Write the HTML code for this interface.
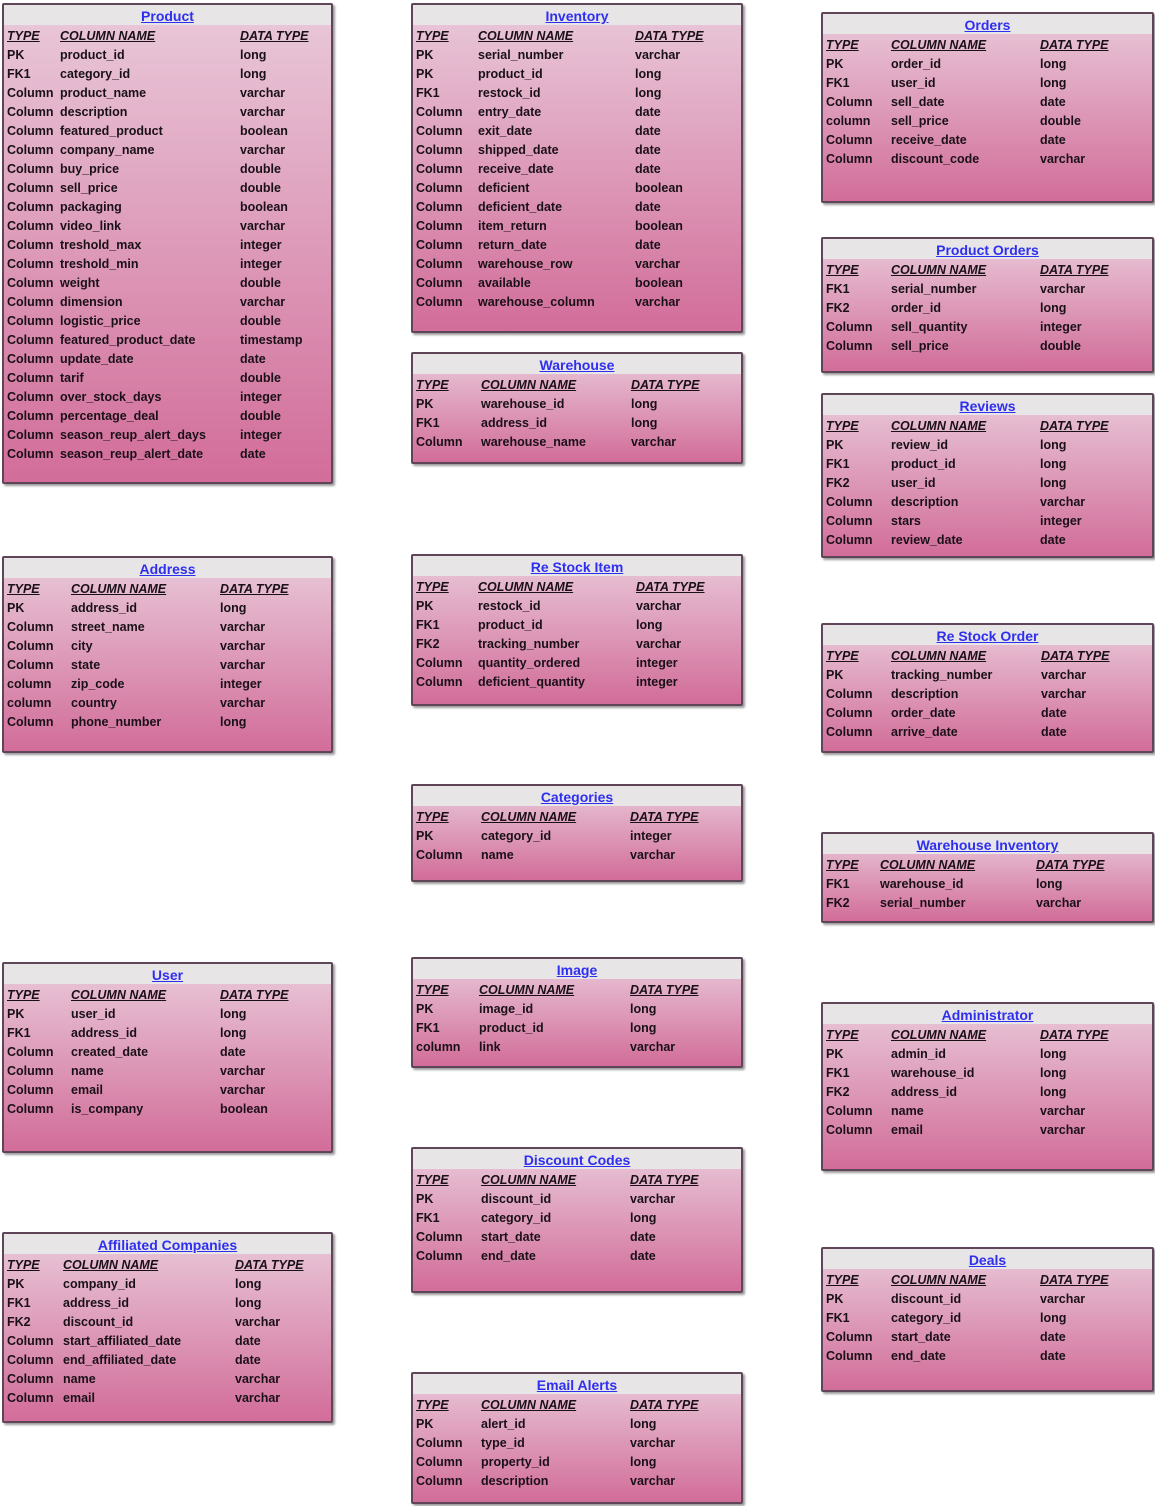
<!DOCTYPE html>
<html><head><meta charset="utf-8"><style>
*{margin:0;padding:0;box-sizing:border-box}
body{width:1155px;height:1506px;background:#fff;position:relative;overflow:hidden;font-family:"Liberation Sans",sans-serif;font-size:12.5px;font-weight:bold;color:#1a1018}
.t{position:absolute;border:2px solid #5e4658;border-radius:2px;background:linear-gradient(#e9c9da,#d26d99);box-shadow:2px 2px 2px #9a9a9a}
.h{height:20px;margin-bottom:2px;background:#e7e5e6;text-align:center;color:#2f2ff0;text-decoration:underline;font-size:14px;line-height:22px}
.r{position:relative;height:19px;line-height:19px;white-space:nowrap}
.r span{position:absolute;top:0}
.r span:nth-child(1){left:3px}
.r span:nth-child(2){left:var(--n)}
.r span:nth-child(3){left:var(--d)}
.hd span{font-style:italic;text-decoration:underline}
</style></head><body>

<div class="t" style="left:2px;top:3px;width:331px;height:481px;--n:56px;--d:236px">
<div class="h">Product</div>
<div class="r hd"><span>TYPE</span><span>COLUMN NAME</span><span>DATA TYPE</span></div>
<div class="r"><span>PK</span><span>product_id</span><span>long</span></div>
<div class="r"><span>FK1</span><span>category_id</span><span>long</span></div>
<div class="r"><span>Column</span><span>product_name</span><span>varchar</span></div>
<div class="r"><span>Column</span><span>description</span><span>varchar</span></div>
<div class="r"><span>Column</span><span>featured_product</span><span>boolean</span></div>
<div class="r"><span>Column</span><span>company_name</span><span>varchar</span></div>
<div class="r"><span>Column</span><span>buy_price</span><span>double</span></div>
<div class="r"><span>Column</span><span>sell_price</span><span>double</span></div>
<div class="r"><span>Column</span><span>packaging</span><span>boolean</span></div>
<div class="r"><span>Column</span><span>video_link</span><span>varchar</span></div>
<div class="r"><span>Column</span><span>treshold_max</span><span>integer</span></div>
<div class="r"><span>Column</span><span>treshold_min</span><span>integer</span></div>
<div class="r"><span>Column</span><span>weight</span><span>double</span></div>
<div class="r"><span>Column</span><span>dimension</span><span>varchar</span></div>
<div class="r"><span>Column</span><span>logistic_price</span><span>double</span></div>
<div class="r"><span>Column</span><span>featured_product_date</span><span>timestamp</span></div>
<div class="r"><span>Column</span><span>update_date</span><span>date</span></div>
<div class="r"><span>Column</span><span>tarif</span><span>double</span></div>
<div class="r"><span>Column</span><span>over_stock_days</span><span>integer</span></div>
<div class="r"><span>Column</span><span>percentage_deal</span><span>double</span></div>
<div class="r"><span>Column</span><span>season_reup_alert_days</span><span>integer</span></div>
<div class="r"><span>Column</span><span>season_reup_alert_date</span><span>date</span></div>
</div>

<div class="t" style="left:411px;top:3px;width:332px;height:330px;--n:65px;--d:222px">
<div class="h">Inventory</div>
<div class="r hd"><span>TYPE</span><span>COLUMN NAME</span><span>DATA TYPE</span></div>
<div class="r"><span>PK</span><span>serial_number</span><span>varchar</span></div>
<div class="r"><span>PK</span><span>product_id</span><span>long</span></div>
<div class="r"><span>FK1</span><span>restock_id</span><span>long</span></div>
<div class="r"><span>Column</span><span>entry_date</span><span>date</span></div>
<div class="r"><span>Column</span><span>exit_date</span><span>date</span></div>
<div class="r"><span>Column</span><span>shipped_date</span><span>date</span></div>
<div class="r"><span>Column</span><span>receive_date</span><span>date</span></div>
<div class="r"><span>Column</span><span>deficient</span><span>boolean</span></div>
<div class="r"><span>Column</span><span>deficient_date</span><span>date</span></div>
<div class="r"><span>Column</span><span>item_return</span><span>boolean</span></div>
<div class="r"><span>Column</span><span>return_date</span><span>date</span></div>
<div class="r"><span>Column</span><span>warehouse_row</span><span>varchar</span></div>
<div class="r"><span>Column</span><span>available</span><span>boolean</span></div>
<div class="r"><span>Column</span><span>warehouse_column</span><span>varchar</span></div>
</div>

<div class="t" style="left:821px;top:12px;width:333px;height:191px;--n:68px;--d:217px">
<div class="h">Orders</div>
<div class="r hd"><span>TYPE</span><span>COLUMN NAME</span><span>DATA TYPE</span></div>
<div class="r"><span>PK</span><span>order_id</span><span>long</span></div>
<div class="r"><span>FK1</span><span>user_id</span><span>long</span></div>
<div class="r"><span>Column</span><span>sell_date</span><span>date</span></div>
<div class="r"><span>column</span><span>sell_price</span><span>double</span></div>
<div class="r"><span>Column</span><span>receive_date</span><span>date</span></div>
<div class="r"><span>Column</span><span>discount_code</span><span>varchar</span></div>
</div>

<div class="t" style="left:821px;top:237px;width:333px;height:136px;--n:68px;--d:217px">
<div class="h">Product Orders</div>
<div class="r hd"><span>TYPE</span><span>COLUMN NAME</span><span>DATA TYPE</span></div>
<div class="r"><span>FK1</span><span>serial_number</span><span>varchar</span></div>
<div class="r"><span>FK2</span><span>order_id</span><span>long</span></div>
<div class="r"><span>Column</span><span>sell_quantity</span><span>integer</span></div>
<div class="r"><span>Column</span><span>sell_price</span><span>double</span></div>
</div>

<div class="t" style="left:411px;top:352px;width:332px;height:112px;--n:68px;--d:218px">
<div class="h">Warehouse</div>
<div class="r hd"><span>TYPE</span><span>COLUMN NAME</span><span>DATA TYPE</span></div>
<div class="r"><span>PK</span><span>warehouse_id</span><span>long</span></div>
<div class="r"><span>FK1</span><span>address_id</span><span>long</span></div>
<div class="r"><span>Column</span><span>warehouse_name</span><span>varchar</span></div>
</div>

<div class="t" style="left:821px;top:393px;width:333px;height:165px;--n:68px;--d:217px">
<div class="h">Reviews</div>
<div class="r hd"><span>TYPE</span><span>COLUMN NAME</span><span>DATA TYPE</span></div>
<div class="r"><span>PK</span><span>review_id</span><span>long</span></div>
<div class="r"><span>FK1</span><span>product_id</span><span>long</span></div>
<div class="r"><span>FK2</span><span>user_id</span><span>long</span></div>
<div class="r"><span>Column</span><span>description</span><span>varchar</span></div>
<div class="r"><span>Column</span><span>stars</span><span>integer</span></div>
<div class="r"><span>Column</span><span>review_date</span><span>date</span></div>
</div>

<div class="t" style="left:2px;top:556px;width:331px;height:197px;--n:67px;--d:216px">
<div class="h">Address</div>
<div class="r hd"><span>TYPE</span><span>COLUMN NAME</span><span>DATA TYPE</span></div>
<div class="r"><span>PK</span><span>address_id</span><span>long</span></div>
<div class="r"><span>Column</span><span>street_name</span><span>varchar</span></div>
<div class="r"><span>Column</span><span>city</span><span>varchar</span></div>
<div class="r"><span>Column</span><span>state</span><span>varchar</span></div>
<div class="r"><span>column</span><span>zip_code</span><span>integer</span></div>
<div class="r"><span>column</span><span>country</span><span>varchar</span></div>
<div class="r"><span>Column</span><span>phone_number</span><span>long</span></div>
</div>

<div class="t" style="left:411px;top:554px;width:332px;height:152px;--n:65px;--d:223px">
<div class="h">Re Stock Item</div>
<div class="r hd"><span>TYPE</span><span>COLUMN NAME</span><span>DATA TYPE</span></div>
<div class="r"><span>PK</span><span>restock_id</span><span>varchar</span></div>
<div class="r"><span>FK1</span><span>product_id</span><span>long</span></div>
<div class="r"><span>FK2</span><span>tracking_number</span><span>varchar</span></div>
<div class="r"><span>Column</span><span>quantity_ordered</span><span>integer</span></div>
<div class="r"><span>Column</span><span>deficient_quantity</span><span>integer</span></div>
</div>

<div class="t" style="left:821px;top:623px;width:333px;height:130px;--n:68px;--d:218px">
<div class="h">Re Stock Order</div>
<div class="r hd"><span>TYPE</span><span>COLUMN NAME</span><span>DATA TYPE</span></div>
<div class="r"><span>PK</span><span>tracking_number</span><span>varchar</span></div>
<div class="r"><span>Column</span><span>description</span><span>varchar</span></div>
<div class="r"><span>Column</span><span>order_date</span><span>date</span></div>
<div class="r"><span>Column</span><span>arrive_date</span><span>date</span></div>
</div>

<div class="t" style="left:411px;top:784px;width:332px;height:98px;--n:68px;--d:217px">
<div class="h">Categories</div>
<div class="r hd"><span>TYPE</span><span>COLUMN NAME</span><span>DATA TYPE</span></div>
<div class="r"><span>PK</span><span>category_id</span><span>integer</span></div>
<div class="r"><span>Column</span><span>name</span><span>varchar</span></div>
</div>

<div class="t" style="left:821px;top:832px;width:333px;height:91px;--n:57px;--d:213px">
<div class="h">Warehouse Inventory</div>
<div class="r hd"><span>TYPE</span><span>COLUMN NAME</span><span>DATA TYPE</span></div>
<div class="r"><span>FK1</span><span>warehouse_id</span><span>long</span></div>
<div class="r"><span>FK2</span><span>serial_number</span><span>varchar</span></div>
</div>

<div class="t" style="left:2px;top:962px;width:331px;height:191px;--n:67px;--d:216px">
<div class="h">User</div>
<div class="r hd"><span>TYPE</span><span>COLUMN NAME</span><span>DATA TYPE</span></div>
<div class="r"><span>PK</span><span>user_id</span><span>long</span></div>
<div class="r"><span>FK1</span><span>address_id</span><span>long</span></div>
<div class="r"><span>Column</span><span>created_date</span><span>date</span></div>
<div class="r"><span>Column</span><span>name</span><span>varchar</span></div>
<div class="r"><span>Column</span><span>email</span><span>varchar</span></div>
<div class="r"><span>Column</span><span>is_company</span><span>boolean</span></div>
</div>

<div class="t" style="left:411px;top:957px;width:332px;height:111px;--n:66px;--d:217px">
<div class="h">Image</div>
<div class="r hd"><span>TYPE</span><span>COLUMN NAME</span><span>DATA TYPE</span></div>
<div class="r"><span>PK</span><span>image_id</span><span>long</span></div>
<div class="r"><span>FK1</span><span>product_id</span><span>long</span></div>
<div class="r"><span>column</span><span>link</span><span>varchar</span></div>
</div>

<div class="t" style="left:821px;top:1002px;width:333px;height:169px;--n:68px;--d:217px">
<div class="h">Administrator</div>
<div class="r hd"><span>TYPE</span><span>COLUMN NAME</span><span>DATA TYPE</span></div>
<div class="r"><span>PK</span><span>admin_id</span><span>long</span></div>
<div class="r"><span>FK1</span><span>warehouse_id</span><span>long</span></div>
<div class="r"><span>FK2</span><span>address_id</span><span>long</span></div>
<div class="r"><span>Column</span><span>name</span><span>varchar</span></div>
<div class="r"><span>Column</span><span>email</span><span>varchar</span></div>
</div>

<div class="t" style="left:411px;top:1147px;width:332px;height:146px;--n:68px;--d:217px">
<div class="h">Discount Codes</div>
<div class="r hd"><span>TYPE</span><span>COLUMN NAME</span><span>DATA TYPE</span></div>
<div class="r"><span>PK</span><span>discount_id</span><span>varchar</span></div>
<div class="r"><span>FK1</span><span>category_id</span><span>long</span></div>
<div class="r"><span>Column</span><span>start_date</span><span>date</span></div>
<div class="r"><span>Column</span><span>end_date</span><span>date</span></div>
</div>

<div class="t" style="left:2px;top:1232px;width:331px;height:191px;--n:59px;--d:231px">
<div class="h">Affiliated Companies</div>
<div class="r hd"><span>TYPE</span><span>COLUMN NAME</span><span>DATA TYPE</span></div>
<div class="r"><span>PK</span><span>company_id</span><span>long</span></div>
<div class="r"><span>FK1</span><span>address_id</span><span>long</span></div>
<div class="r"><span>FK2</span><span>discount_id</span><span>varchar</span></div>
<div class="r"><span>Column</span><span>start_affiliated_date</span><span>date</span></div>
<div class="r"><span>Column</span><span>end_affiliated_date</span><span>date</span></div>
<div class="r"><span>Column</span><span>name</span><span>varchar</span></div>
<div class="r"><span>Column</span><span>email</span><span>varchar</span></div>
</div>

<div class="t" style="left:821px;top:1247px;width:333px;height:145px;--n:68px;--d:217px">
<div class="h">Deals</div>
<div class="r hd"><span>TYPE</span><span>COLUMN NAME</span><span>DATA TYPE</span></div>
<div class="r"><span>PK</span><span>discount_id</span><span>varchar</span></div>
<div class="r"><span>FK1</span><span>category_id</span><span>long</span></div>
<div class="r"><span>Column</span><span>start_date</span><span>date</span></div>
<div class="r"><span>Column</span><span>end_date</span><span>date</span></div>
</div>

<div class="t" style="left:411px;top:1372px;width:332px;height:132px;--n:68px;--d:217px">
<div class="h">Email Alerts</div>
<div class="r hd"><span>TYPE</span><span>COLUMN NAME</span><span>DATA TYPE</span></div>
<div class="r"><span>PK</span><span>alert_id</span><span>long</span></div>
<div class="r"><span>Column</span><span>type_id</span><span>varchar</span></div>
<div class="r"><span>Column</span><span>property_id</span><span>long</span></div>
<div class="r"><span>Column</span><span>description</span><span>varchar</span></div>
</div>

</body></html>
